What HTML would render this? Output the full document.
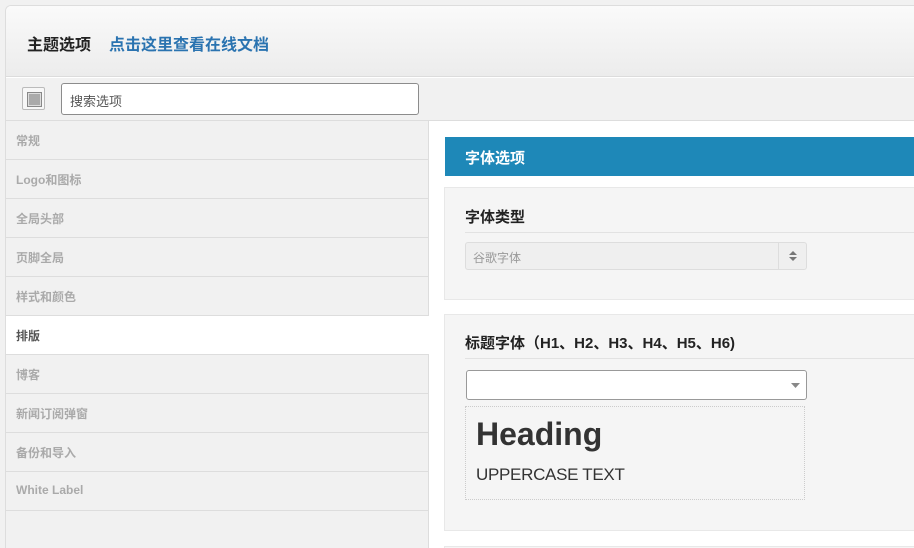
<!DOCTYPE html>
<html><head><meta charset="utf-8"><style>
*{margin:0;padding:0;box-sizing:border-box}
html,body{width:914px;height:548px;overflow:hidden}
body{background:#f1f1f1;font-family:"Liberation Sans","Noto Sans CJK SC",sans-serif;position:relative}
.wrap{position:absolute;left:5px;top:5px;width:909px;height:543px;border:1px solid #ddd;border-right:none;border-bottom:none;border-radius:6px 0 0 0;background:#fff;overflow:hidden}
.hdr{position:absolute;left:0;top:0;width:100%;height:71px;background:linear-gradient(#fafafa,#ececec);border-bottom:1px solid #dcdcdc}
.hdr .t{position:absolute;left:21px;top:25px;font-size:16px;font-weight:bold;color:#222}
.hdr .l{position:absolute;left:103px;top:25px;font-size:16px;font-weight:bold;color:#2a73b0}
.bar{position:absolute;left:0;top:72px;width:100%;height:43px;background:#f1f1f1;border-bottom:1px solid #ddd}
.ico{position:absolute;left:16px;top:9px;width:23px;height:23px;border:1px solid #bbb;border-radius:2px;background:#f7f7f7}
.ico:after{content:"";position:absolute;left:4px;top:4px;width:13px;height:13px;border:1px solid #888;background:#aaa;box-shadow:inset 0 0 0 1px #ddd}
.srch{position:absolute;left:55px;top:5px;width:358px;height:32px;border:1px solid #8c8c8c;border-radius:3px;background:#fff;font-size:13px;color:#555;padding:7px 8px}
.side{position:absolute;left:0;top:115px;width:423px;height:430px;background:#f1f1f1;border-right:1px solid #ddd}
.it{height:39px;border-bottom:1px solid #ddd;font-size:12px;font-weight:bold;color:#aaa;padding:11px 0 0 10px}
.it.a{background:#fff;color:#555;margin-right:-1px}
.main{position:absolute;left:424px;top:115px;width:485px;height:430px;background:#fff;overflow:hidden}
.blue{position:absolute;left:15px;top:16px;width:480px;height:39px;background:#1e88b8;color:#fff;font-size:15px;font-weight:bold;padding:10px 20px}
.box{position:absolute;left:14px;width:480px;background:#f5f5f5;border:1px solid #e8e8e8}
.box h3{margin:0 0 0 20px;font-size:15px;font-weight:bold;color:#222;border-bottom:1px solid #e2e2e2}
.sel1{position:absolute;left:20px;top:54px;width:342px;height:28px;border:1px solid #ddd;border-radius:3px;background:#efefef;font-size:12px;color:#999;padding:6px 7px}
.sel1 .ar{position:absolute;right:0;top:0;width:28px;height:26px;border-left:1px solid #ddd}
.sel2{position:absolute;left:21px;top:55px;width:341px;height:30px;border:1px solid #999;border-radius:3px;background:#fff}
.prev{position:absolute;left:20px;top:91px;width:340px;height:94px;border:1px dotted #ccc}
</style></head><body>
<div class="wrap">
 <div class="hdr"><span class="t">主题选项</span><span class="l">点击这里查看在线文档</span></div>
 <div class="bar"><div class="ico"></div><div class="srch">搜索选项</div></div>
 <div class="side">
  <div class="it">常规</div><div class="it">Logo和图标</div><div class="it">全局头部</div><div class="it">页脚全局</div><div class="it">样式和颜色</div><div class="it a">排版</div><div class="it">博客</div><div class="it">新闻订阅弹窗</div><div class="it">备份和导入</div><div class="it">White Label</div>
 </div>
 <div class="main">
  <div class="blue">字体选项</div>
  <div class="box" style="top:66px;height:113px">
   <h3 style="padding:18px 0 5px">字体类型</h3>
   <div class="sel1">谷歌字体<div class="ar"><svg width="28" height="26"><path d="M10 12l4-4 4 4z M10 14l4 4 4-4z" fill="#777"/></svg></div></div>
  </div>
  <div class="box" style="top:193px;height:217px">
   <h3 style="padding:17px 0 5px">标题字体（H1、H2、H3、H4、H5、H6)</h3>
   <div class="sel2"><svg style="position:absolute;right:4px;top:10px" width="12" height="8"><path d="M1 2h9l-4.5 5z" fill="#888"/></svg></div>
   <div class="prev">
    <div style="position:absolute;left:10px;top:9px;font-size:32px;font-weight:bold;color:#333">Heading</div>
    <div style="position:absolute;left:10px;top:58px;font-size:17px;letter-spacing:-0.3px;color:#333">UPPERCASE TEXT</div>
   </div>
  </div>
  <div class="box" style="top:425px;height:40px"></div>
 </div>
</div>
</body></html>
